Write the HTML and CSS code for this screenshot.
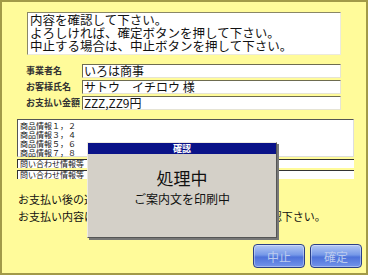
FILE: index.html
```html
<!DOCTYPE html>
<html lang="ja">
<head>
  <meta charset="UTF-8">
  <meta name="viewport" content="width=device-width, initial-scale=1.0">
  <title>確認</title>
  <link rel="stylesheet" href="styles.css">
</head>
<body>
  <div class="screen">
    <div class="message">内容を確認して下さい。<br>よろしければ、確定ボタンを押して下さい。<br>中止する場合は、中止ボタンを押して下さい。</div>

    <div class="fields">
      <div class="label">事業者名</div>
      <div class="value">いろは商事</div>
      <div class="label">お客様氏名</div>
      <div class="value">サトウ　イチロウ 様</div>
      <div class="label">お支払い金額</div>
      <div class="value">ZZZ,ZZ9円</div>
    </div>

    <div class="items">商品情報１，２<br>商品情報３，４<br>商品情報５，６<br>商品情報７，８</div>
    <div class="inquiry">問い合わせ情報等</div>
    <div class="inquiry">問い合わせ情報等</div>

    <div class="notes">お支払い後の返金はできませんのでご注意下さい。<br>お支払い内容に誤りがないか、レシートで必ずご確認下さい。</div>

    <div class="buttons">
      <button class="btn">中止</button>
      <button class="btn">確定</button>
    </div>

    <div class="dialog">
      <div class="dialog-title">確認</div>
      <div class="dialog-body">
        <div class="dialog-main">処理中</div>
        <div class="dialog-sub">ご案内文を印刷中</div>
      </div>
    </div>
  </div>
</body>
</html>
```

FILE: styles.css
```css
body {
  margin: 0;
  font-family: "Noto Sans CJK JP", "DejaVu Sans", sans-serif;
}
.screen {
  position: relative;
  width: 368px;
  height: 275px;
  box-sizing: border-box;
  border: 2px solid #a29a48;
  background-color: #fffb9a;
  padding-top: 10px;
  display: flex;
  flex-direction: column;
  color: #111;
}
.message {
  margin-left: 25px;
  width: 314px;
  height: 43px;
  box-sizing: border-box;
  padding: 1px 2px 0;
  background-color: #fff;
  border: 1px solid;
  border-color: #8a8766 #eceadd #eceadd #8a8766;
  font-size: 12.5px;
  line-height: 12.8px;
}
.fields {
  margin: 9px 0 0 24px;
  display: grid;
  grid-template-columns: 56px 259px;
  grid-auto-rows: 14px;
  row-gap: 2px;
}
.label {
  font-size: 9px;
  font-weight: bold;
  line-height: 14px;
  color: #333;
  white-space: nowrap;
}
.value {
  box-sizing: border-box;
  background-color: #fff;
  border: 1px solid;
  border-color: #6e6c50 #e6e4d4 #e6e4d4 #6e6c50;
  padding-left: 1px;
  font-size: 12px;
  line-height: 12px;
}
.items {
  margin: 9px 0 0 15px;
  width: 337px;
  height: 38px;
  box-sizing: border-box;
  padding: 1px 2px 0;
  background-color: #fff;
  border: 1px solid;
  border-color: #555 #ddd #ddd #555;
  font-size: 8px;
  line-height: 9px;
}
.inquiry {
  margin: 2px 0 0 15px;
  width: 337px;
  height: 9px;
  box-sizing: border-box;
  padding-left: 2px;
  background-color: #fff;
  border-top: 1px solid #333;
  border-left: 1px solid #333;
  font-size: 8px;
  line-height: 8px;
}
.notes {
  margin: 12px 0 0 16px;
  font-size: 11px;
  line-height: 17px;
}
.buttons {
  margin-top: auto;
  margin-bottom: 5px;
  margin-right: 4px;
  align-self: flex-end;
  display: flex;
  gap: 5px;
}
.btn {
  width: 52px;
  height: 24px;
  padding: 0;
  border: 1px solid #2a3f86;
  border-radius: 4px;
  background: linear-gradient(#b4c8f4, #7598e8 45%, #4d72da 55%, #7394ea);
  box-shadow: inset 0 0 0 1px rgba(255,255,255,0.35);
  color: #bccbee;
  font-family: inherit;
  font-size: 12px;
}
.dialog {
  position: absolute;
  left: 85px;
  top: 140px;
  width: 190px;
  height: 96px;
  box-sizing: border-box;
  background-color: #d4d0c8;
  border: 1px solid;
  border-color: #eeeae2 #555 #555 #eeeae2;
  box-shadow: 2px 2px 0 #777;
  display: flex;
  flex-direction: column;
}
.dialog-title {
  height: 11px;
  background-color: #0a1288;
  color: #fff;
  font-size: 9px;
  font-weight: bold;
  line-height: 11px;
  text-align: center;
}
.dialog-body {
  flex: 1;
  text-align: center;
  padding-top: 12px;
}
.dialog-main {
  font-size: 17px;
  line-height: 24px;
}
.dialog-sub {
  font-size: 12px;
  line-height: 17px;
}
```
